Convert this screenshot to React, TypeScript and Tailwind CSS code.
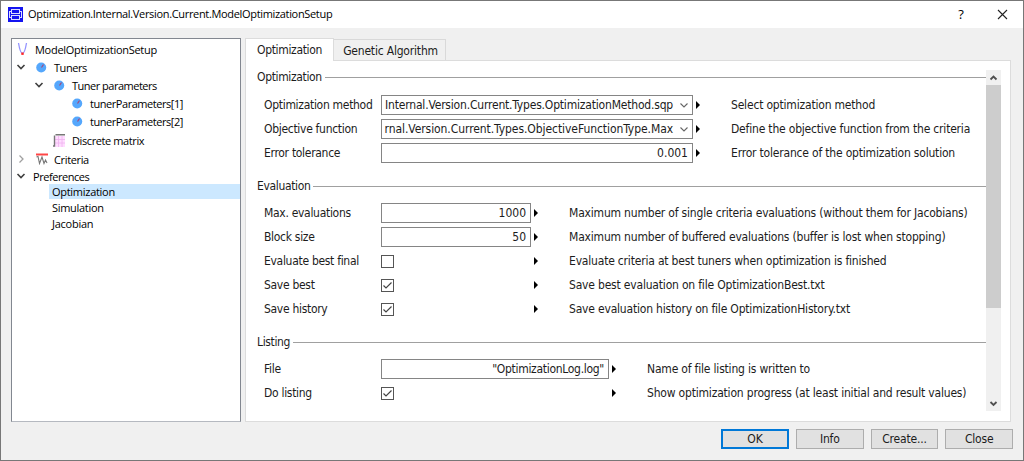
import React, { useState } from 'react';

const TREE_FONT = 'font-["Open_Sans","Noto_Sans",sans-serif]';
const FORM_FONT = 'font-["DejaVu_Sans_Condensed","DejaVu_Sans",sans-serif] tracking-[-0.19px]';

const AppIcon = () => (
  <svg className="h-[15px] w-[15px] shrink-0" viewBox="0 0 15 15" fill="none" shapeRendering="crispEdges">
    <rect width="15" height="15" fill="#1414f0" />
    <path d="M3.5 2.5h8v4h-8zM3.5 8.5h8v4h-8zM3 4.5H1.5v6H3M12 4.5h1.5v6H12" stroke="#dcdcff" />
  </svg>
);

const SetupIcon = () => (
  <svg className="h-[14px] w-[12px]" viewBox="0 0 12 14" fill="none">
    <path d="M1.5 1C2.5 7 4 11.5 5.5 11.5S8.500 7 9.500 1" stroke="#9292ff" strokeWidth="1.3" />
    <rect x="4.300" y="10.500" width="2.400" height="2.400" fill="#ff2525" />
  </svg>
);

const TunerIcon = () => (
  <svg className="h-[11px] w-[11px]" viewBox="0 0 11 11">
    <circle cx="5.200" cy="5.500" r="5" fill="#55a7fc" />
    <path d="M5.500 5.500L7.500 2.500" stroke="#a84878" strokeWidth="1.200" />
  </svg>
);

const MatrixIcon = () => (
  <svg className="h-[13px] w-[14px]" viewBox="0 0 14 13" fill="none">
    <rect x="3" y="2" width="10" height="11" fill="#ffdcff" />
    <path d="M3 5.500h10M3 9h10M6.500 2v11M10 2v11" stroke="#efb2ef" strokeWidth="0.800" />
    <path d="M3.500 0.800H13M2.500 1.500V12H1" stroke="#777" strokeWidth="1.400" />
  </svg>
);

const CriteriaIcon = () => (
  <svg className="h-[12px] w-[12px]" viewBox="0 0 12 12" fill="none">
    <path d="M0 1.500h12" stroke="#ff4646" strokeWidth="2" />
    <path d="M0.500 4L2 3.500L3.500 10.500L6 4L8 10.500L9.500 7L11 10" stroke="#777" strokeWidth="1.100" />
  </svg>
);

const Chevron = ({ open }: { open: boolean }) => (
  <svg className="h-[10px] w-[10px]" viewBox="0 0 10 10" fill="none">
    {open ? (
      <path d="M1.500 3L5 6.500L8.500 3" stroke="#404040" strokeWidth="1.600" />
    ) : (
      <path d="M3.500 1.500L7 5L3.500 8.500" stroke="#a0a0a0" strokeWidth="1.300" />
    )}
  </svg>
);

interface TreeItem {
  label: string;
  row: string;
  text: string;
  icon?: React.ReactNode;
  open?: boolean;
}

const treeItems: TreeItem[] = [
  { label: 'ModelOptimizationSetup', row: 'h-[18px] pl-[5px]', text: 'ml-[6px] tracking-[-0.28px]', icon: <SetupIcon /> },
  { label: 'Tuners', row: 'h-[18px] pl-[4px]', text: 'ml-[7px] tracking-[-0.45px]', icon: <TunerIcon />, open: true },
  { label: 'Tuner parameters', row: 'h-[18px] pl-[22px]', text: 'ml-[7px] tracking-[-0.5px]', icon: <TunerIcon />, open: true },
  { label: 'tunerParameters[1]', row: 'h-[18px] pl-[60px]', text: 'ml-[7px] tracking-[-0.45px]', icon: <TunerIcon /> },
  { label: 'tunerParameters[2]', row: 'h-[18px] pl-[60px]', text: 'ml-[7px] tracking-[-0.45px]', icon: <TunerIcon /> },
  { label: 'Discrete matrix', row: 'h-[20px] pl-[40px]', text: 'ml-[6px] tracking-[-0.4px]', icon: <MatrixIcon /> },
  { label: 'Criteria', row: 'h-[18px] pl-[4px]', text: 'ml-[6px] tracking-[-0.35px]', icon: <CriteriaIcon />, open: false },
  { label: 'Preferences', row: 'h-[16px] pl-[4px]', text: 'ml-[7px] tracking-[-0.45px]', open: true },
  { label: 'Optimization', row: 'h-[15px] ml-[37px] pl-[3px]', text: 'tracking-[-0.28px]' },
  { label: 'Simulation', row: 'h-[16px] ml-[37px] pl-[3px]', text: 'tracking-[-0.3px]' },
  { label: 'Jacobian', row: 'h-[16px] ml-[37px] pl-[3px]', text: 'tracking-[-0.25px]' },
];

interface FormRow {
  label: string;
  help: string;
  value?: string;
  valueClass?: string;
  combo?: boolean;
  check?: boolean;
}

interface FormGroup {
  title: string;
  box: string;
  width: string;
  rows: FormRow[];
}

const groups: FormGroup[] = [
  {
    title: 'Optimization',
    box: 'h-[109px]',
    width: 'w-[312px]',
    rows: [
      { label: 'Optimization method', value: 'Internal.Version.Current.Types.OptimizationMethod.sqp', valueClass: 'tracking-[-0.19px]', combo: true, help: 'Select optimization method' },
      { label: 'Objective function', value: 'rnal.Version.Current.Types.ObjectiveFunctionType.Max', valueClass: 'tracking-[-0.07px]', combo: true, help: 'Define the objective function from the criteria' },
      { label: 'Error tolerance', value: '0.001', help: 'Error tolerance of the optimization solution' },
    ],
  },
  {
    title: 'Evaluation',
    box: 'h-[156px]',
    width: 'w-[150px]',
    rows: [
      { label: 'Max. evaluations', value: '1000', help: 'Maximum number of single criteria evaluations (without them for Jacobians)' },
      { label: 'Block size', value: '50', help: 'Maximum number of buffered evaluations (buffer is lost when stopping)' },
      { label: 'Evaluate best final', check: false, help: 'Evaluate criteria at best tuners when optimization is finished' },
      { label: 'Save best', check: true, help: 'Save best evaluation on file OptimizationBest.txt' },
      { label: 'Save history', check: true, help: 'Save evaluation history on file OptimizationHistory.txt' },
    ],
  },
  {
    title: 'Listing',
    box: 'h-[70px]',
    width: 'w-[228px]',
    rows: [
      { label: 'File', value: '"OptimizationLog.log"', valueClass: 'tracking-[-0.3px]', help: 'Name of file listing is written to' },
      { label: 'Do listing', check: true, help: 'Show optimization progress (at least initial and result values)' },
    ],
  },
];

const Field = ({ row }: { row: FormRow }) => {
  const [checked, setChecked] = useState(!!row.check);

  if (row.value === undefined) {
    return (
      <button onClick={() => setChecked(!checked)} className="h-[13px] w-[13px] border border-[#555] bg-white">
        {checked && (
          <svg className="h-[11px] w-[11px]" viewBox="0 0 11 11" fill="none">
            <path d="M1.500 5.500L4 8L9.500 2.500" stroke="#444" strokeWidth="1.200" />
          </svg>
        )}
      </button>
    );
  }

  return (
    <div className="flex h-[20px] w-full items-center border border-[#858585] bg-white pl-[2px]">
      <div className={`flex min-w-0 flex-1 justify-end whitespace-nowrap ${row.combo ? '' : 'pr-[4px]'}`}>
        <span className={row.valueClass ?? 'tracking-normal'}>{row.value}</span>
      </div>
      {row.combo && (
        <svg className="mr-[3px] ml-[6px] h-[10px] w-[10px] shrink-0" viewBox="0 0 10 10" fill="none">
          <path d="M1.500 3.500L5 7L8.500 3.500" stroke="#666" strokeWidth="1.100" />
        </svg>
      )}
    </div>
  );
};

const buttons = ['OK', 'Info', 'Create...', 'Close'];

export default function App() {
  const [selected, setSelected] = useState('Optimization');

  return (
    <div className={`flex h-[461px] w-[1024px] flex-col overflow-hidden border border-[#777] bg-[#f0f0f0] text-[12px] text-[#1c1c1c] ${FORM_FONT}`}>
      {/* Title bar */}
      <header className="flex h-[27px] shrink-0 items-center bg-white pl-[7px] text-black">
        <AppIcon />
        <span className={`ml-[5px] flex-1 text-[11px] whitespace-nowrap ${TREE_FONT}`}>
          <span className="tracking-[-0.33px]">Optimization.Internal.Version.Current.ModelOptimizationSetup</span>
        </span>
        <span className={`w-[8px] text-center text-[13px] ${TREE_FONT}`}>?</span>
        <svg className="mr-[15px] ml-[32px] h-[11px] w-[11px]" viewBox="0 0 11 11" fill="none">
          <path d="M1 1L10 10M10 1L1 10" stroke="#222" strokeWidth="1.100" />
        </svg>
      </header>

      <main className="flex h-[394px] shrink-0 pt-[10px] pl-[10px]">
        {/* Tree */}
        <nav className={`h-[384px] w-[230px] shrink-0 border border-[#828790] border-b-[#b5b9c0] bg-white pt-[1px] text-[11px] leading-none text-black ${TREE_FONT}`}>
          {treeItems.map((item) => (
            <div
              key={item.label}
              onClick={() => setSelected(item.label)}
              className={`flex items-center whitespace-nowrap ${item.row} ${selected === item.label ? 'bg-[#cce8ff]' : ''}`}
            >
              {item.open !== undefined && <Chevron open={item.open} />}
              {item.icon && <span className={item.open !== undefined ? 'ml-[10px]' : ''}>{item.icon}</span>}
              <span className={item.text}>{item.label}</span>
            </div>
          ))}
        </nav>

        {/* Tabs */}
        <section className="ml-[4px] w-[766px]">
          <div className="flex h-[22px] items-end">
            <div className="z-10 -mb-px flex h-[23px] w-[89px] justify-center border border-b-0 border-[#dcdcdc] bg-white pt-[2px] tracking-[-0.35px]">Optimization</div>
            <div className="flex h-[21px] w-[112px] justify-center border border-b-0 border-l-0 border-[#d9d9d9] pt-[2px] pl-[2px]">Genetic Algorithm</div>
          </div>

          <div className="flex h-[362px] border border-[#dcdcdc] bg-white pt-[8px]">
            <div className="w-[740px] pl-[11px]">
              {groups.map((group) => (
                <div key={group.title} className={group.box}>
                  <div className="flex h-[16px] items-center leading-[16px]">
                    <span className="tracking-[-0.35px]">{group.title}</span>
                    <div className="ml-[3px] h-px flex-1 bg-[#a0a0a0]" />
                  </div>
                  <div className={group.title === 'Optimization' ? 'pt-[8px]' : 'pt-[7px]'}>
                    {group.rows.map((row) => (
                      <div key={row.label} className="flex h-[24px] items-center pl-[7px] whitespace-nowrap">
                        <span className="w-[117px] tracking-[-0.3px]">{row.label}</span>
                        <div className={`flex shrink-0 ${group.width}`}>
                          <Field row={row} />
                        </div>
                        <svg className="ml-[3px] h-[8px] w-[4px]" viewBox="0 0 4 8">
                          <path d="M0 0L4 4L0 8z" fill="#000" />
                        </svg>
                        <span className="ml-[31px]">{row.help}</span>
                      </div>
                    ))}
                  </div>
                </div>
              ))}
            </div>

            {/* Scrollbar */}
            <div className="mt-px flex h-[341px] w-[15px] flex-col items-center bg-[#f0f0f0]">
              <svg className="h-[15px] w-[15px]" viewBox="0 0 15 15" fill="none">
                <path d="M4.500 9.500L7.500 6.500L10.500 9.500" stroke="#505050" strokeWidth="1.800" />
              </svg>
              <div className="h-[223px] w-full bg-[#cdcdcd]" />
              <svg className="mt-auto h-[15px] w-[15px]" viewBox="0 0 15 15" fill="none">
                <path d="M4.500 6L7.500 9L10.500 6" stroke="#505050" strokeWidth="1.800" />
              </svg>
            </div>
          </div>
        </section>
      </main>

      {/* Buttons */}
      <footer className="flex justify-end gap-[7px] pt-[7px] pr-[10px]">
        {buttons.map((label, i) => (
          <button
            key={label}
            className={`flex h-[20px] items-center justify-center bg-[#e1e1e1] ${i === 0 ? 'w-[68px] border-2 border-[#0078d7]' : 'w-[67.700px] border border-[#adadad]'}`}
          >
            {label}
          </button>
        ))}
      </footer>
    </div>
  );
}
